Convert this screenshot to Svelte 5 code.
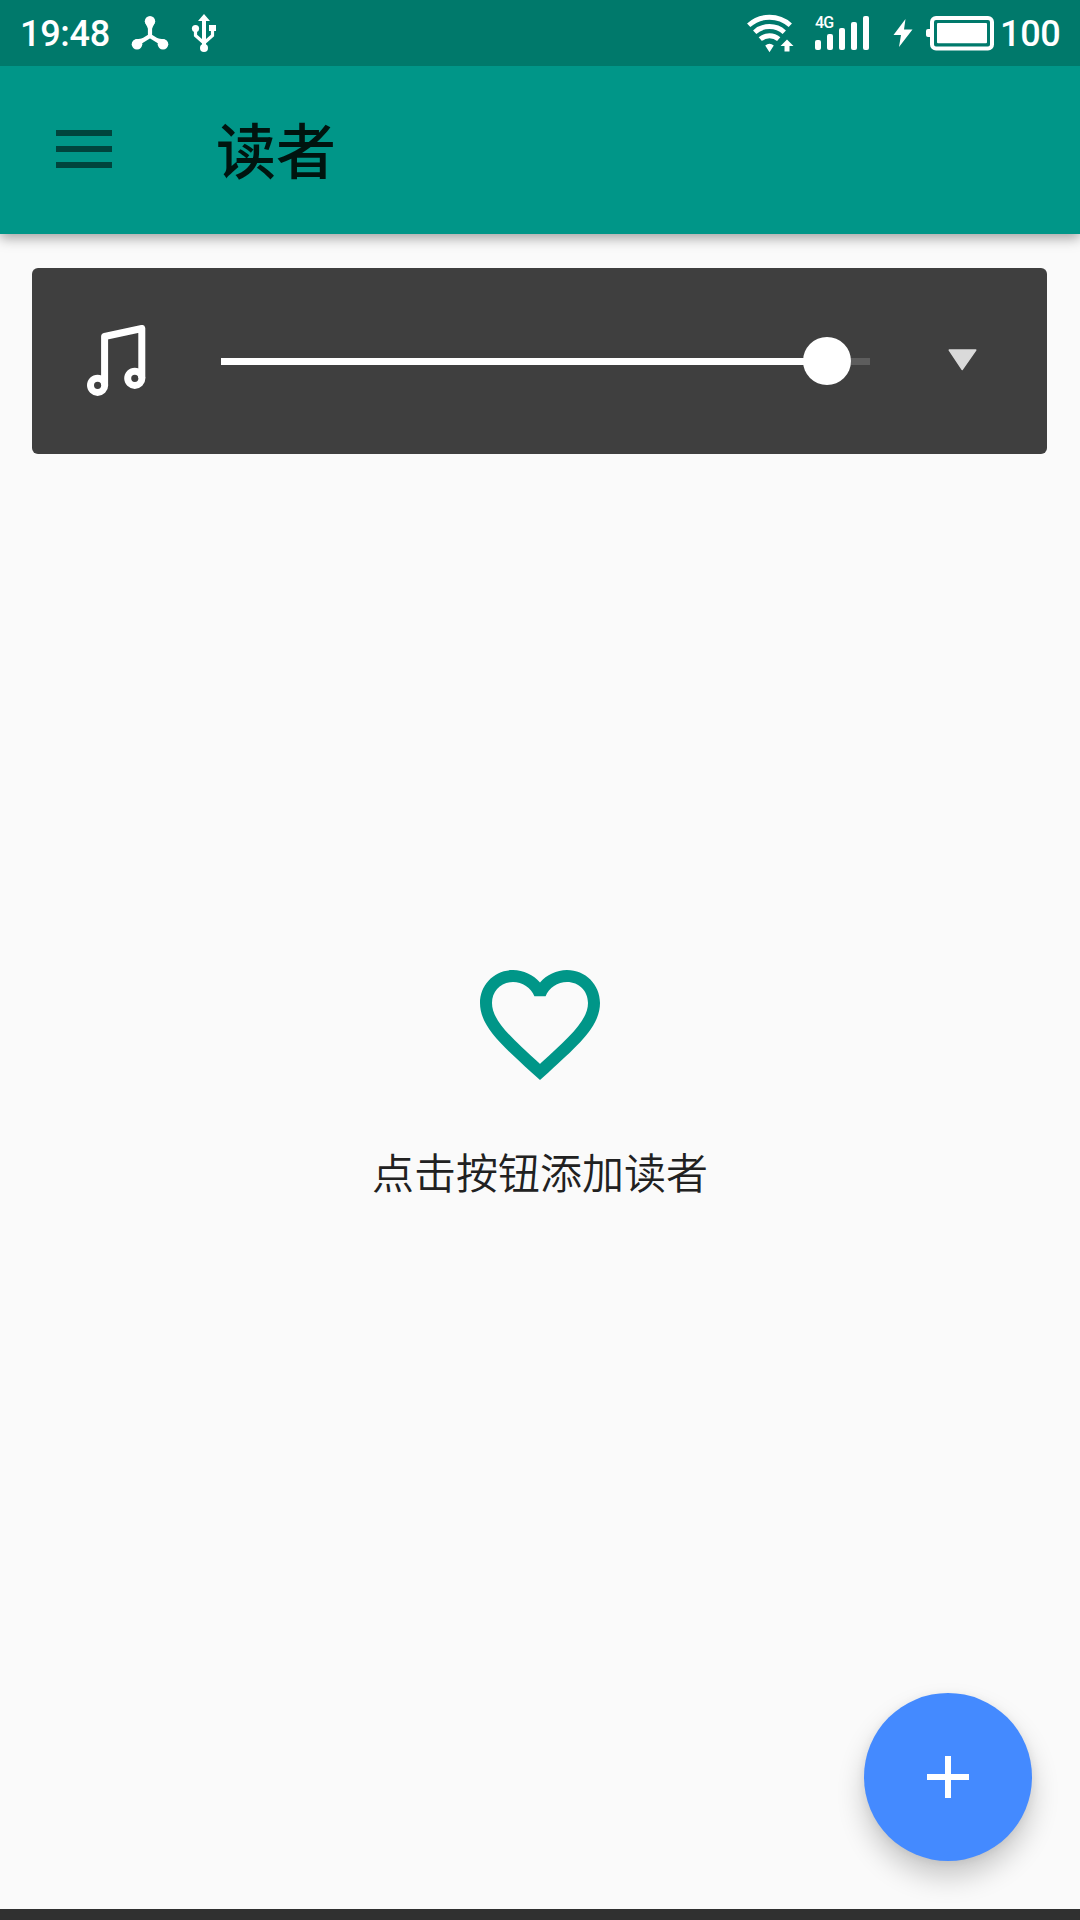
<script>
  let volume = $state(93.4);
  const signalBars = [10, 16, 22, 28, 34];
</script>

<div class="screen">
  <header class="status">
    <span class="time">19:48</span>
    <svg class="node" width="38" height="36" viewBox="0 0 38 36">
      <path d="M19 6V21M19 20L6 28M19 20L32 28" stroke="#fff" stroke-width="4.2" fill="none" />
      <path d="M14.5 7L18 15H20L23.5 7ZM4 23.5L14 22L8 33ZM34 23.5L24 22L30 33Z" fill="#fff" />
      <circle cx="19" cy="5.2" r="5.2" fill="#fff" />
      <circle cx="6" cy="28.2" r="5.3" fill="#fff" />
      <circle cx="32" cy="28.2" r="5.3" fill="#fff" />
    </svg>
    <svg class="usb" width="26" height="38" viewBox="0 0 26 38">
      <path d="M13 4V34" stroke="#fff" stroke-width="4" fill="none" />
      <path d="M4.5 14V21.5L13 29M21.5 14V21.5L13 29" stroke="#fff" stroke-width="3.2" fill="none" />
      <path d="M13 0L19 7H7ZM18 11H25V17H18Z" fill="#fff" />
      <circle cx="4.5" cy="14.5" r="3.6" fill="#fff" />
      <circle cx="13" cy="34" r="4" fill="#fff" />
    </svg>
    <span class="spacer"></span>
    <svg class="wifi" width="48" height="40" viewBox="0 0 48 40">
      <g stroke="#fff" stroke-width="4.9" fill="none">
        <path d="M1.7 11.2A31 31 0 0 1 43.3 11.2" />
        <path d="M7.7 18.2A22 22 0 0 1 37.3 18.2" />
        <path d="M13.3 25.2A14 14 0 0 1 31.7 25.2" />
      </g>
      <path d="M18.2 31.4Q22.5 28 26.8 31.4L22.5 38.2ZM40 25.4L46.5 32H42.5V37.5H37.5V32H33.5Z" fill="#fff" />
    </svg>
    <div class="signal">
      <span class="network">4G</span>
      {#each signalBars as h}
        <i style:height="{h}px"></i>
      {/each}
    </div>
    <svg class="bolt" width="20" height="28" viewBox="0 0 20 28">
      <path d="M12.5 0L0.5 16H8L6 28L19.5 10.5H11Z" fill="#fff" />
    </svg>
    <svg class="battery" width="69" height="36" viewBox="0 0 69 36">
      <rect x="6" y="2" width="60" height="30.5" rx="4" stroke="#fff" stroke-width="4" fill="none" />
      <path d="M5 13H2Q0 13 0 15V19Q0 21 2 21H5Z" fill="#fff" />
      <rect x="11" y="7" width="50" height="20.3" rx="1" fill="#fff" />
    </svg>
    <span class="percent">100</span>
  </header>

  <div class="appbar">
    <button class="menu" aria-label="菜单"><i></i><i></i><i></i></button>
    <h1>读者</h1>
  </div>

  <main>
    <section class="volume">
      <svg class="note" width="60" height="72" viewBox="0 0 60 72">
        <path d="M17.6 60V11.5L54.8 3.5V53" stroke="#fff" stroke-width="7" stroke-linejoin="round" fill="none" />
        <circle cx="10.6" cy="60.3" r="7.1" stroke="#fff" stroke-width="7" fill="none" />
        <circle cx="47.8" cy="53.3" r="7.1" stroke="#fff" stroke-width="7" fill="none" />
      </svg>
      <div class="track">
        <div class="fill" style:width="{volume}%"><b></b></div>
      </div>
      <svg class="caret" width="29" height="22" viewBox="0 0 29 22">
        <path d="M1.2 1H27.8L14.2 20.5Z" fill="#dadada" stroke="#dadada" stroke-width="1.4" stroke-linejoin="round" />
      </svg>
    </section>

    <section class="empty">
      <svg width="144" height="144" viewBox="0 0 24 24" fill="#009688">
        <path d="M12.1 18.55L12 18.65L11.89 18.55C7.14 14.24 4 11.39 4 8.5C4 6.5 5.5 5 7.5 5C9.04 5 10.54 6 11.07 7.36H12.93C13.46 6 14.96 5 16.5 5C18.5 5 20 6.5 20 8.5C20 11.39 16.86 14.24 12.1 18.55M16.5 3C14.76 3 13.09 3.81 12 5.08C10.91 3.81 9.24 3 7.5 3C4.42 3 2 5.41 2 8.5C2 12.27 5.4 15.36 10.55 20.03L12 21.35L13.45 20.03C18.6 15.36 22 12.27 22 8.5C22 5.41 19.58 3 16.5 3Z" />
      </svg>
      <p>点击按钮添加读者</p>
    </section>

    <button class="fab" aria-label="添加">
      <svg width="42" height="42" viewBox="0 0 42 42"><path d="M18 0H24V18H42V24H24V42H18V24H0V18H18Z" fill="#fff" /></svg>
    </button>
  </main>
  <footer></footer>
</div>

<style>
  :global(body) { margin: 0; }
  .screen {
    width: 1080px;
    height: 1920px;
    display: flex;
    flex-direction: column;
    overflow: hidden;
    background: #fafafa;
    font-family: Roboto, "Noto Sans CJK SC", sans-serif;
  }
  button { border: 0; padding: 0; }
  svg { display: block; flex: none; }
  .status {
    flex: none;
    position: relative;
    z-index: 2;
    box-sizing: border-box;
    height: 66px;
    display: flex;
    align-items: flex-start;
    padding-left: 20px;
    background: #00796b;
    color: #fff;
    font-size: 36px;
    font-weight: 500;
  }
  .time, .percent { line-height: 42px; margin-top: 13px; letter-spacing: -0.3px; }
  .time { width: 92px; }
  .node { margin: 16px 0 0 19px; }
  .usb { margin: 14px 0 0 22px; }
  .spacer { flex: 1; }
  .wifi { margin: 13.5px 0 0; }
  .signal {
    position: relative;
    display: flex;
    align-items: flex-end;
    gap: 6px;
    height: 34px;
    margin: 16px 0 0 20.5px;
  }
  .signal i { width: 6px; border-radius: 2px; background: #fff; }
  .network {
    position: absolute;
    left: 0;
    top: -1px;
    font-size: 16px;
    line-height: 16px;
    font-weight: 500;
    letter-spacing: -0.9px;
  }
  .bolt { margin: 19px 0 0 24px; }
  .battery { margin: 16px 0 0 13px; }
  .percent { width: 80px; margin-left: 5px; }
  .appbar {
    flex: none;
    position: relative;
    height: 168px;
    display: flex;
    align-items: center;
    background: #009688;
    box-shadow: 0 4px 12px rgba(0, 0, 0, 0.36);
  }
  .menu {
    display: flex;
    flex-direction: column;
    gap: 10px;
    width: 56px;
    margin: -2px 0 0 56px;
    background: none;
  }
  .menu i { height: 6px; background: #00443d; }
  h1 {
    margin: 8px 0 0 104px;
    font-size: 60px;
    line-height: 88px;
    font-weight: 500;
    color: #00140f;
  }
  main { flex: 1; display: flex; flex-direction: column; }
  .volume {
    box-sizing: border-box;
    height: 186px;
    margin: 34px 33px 0 32px;
    padding: 0 70px 0 55px;
    display: flex;
    align-items: center;
    border-radius: 6px;
    background: #3f3f3f;
  }
  .note { margin: 0 74px 0 0; }
  .track { flex: none; width: 649px; height: 7px; margin-top: 1px; background: #5d5d5d; }
  .fill { display: flex; align-items: center; justify-content: flex-end; height: 7px; background: #fff; }
  .fill b { flex: none; width: 48px; height: 48px; margin: 0 -24px 1px 0; border-radius: 50%; background: #fff; }
  .caret { margin: 0 0 2px 78px; }
  .empty {
    flex: 1;
    display: flex;
    flex-direction: column;
    align-items: center;
    padding-top: 498px;
  }
  .empty p { margin: 48px 0 0; font-size: 42px; line-height: 62px; font-weight: 350; color: #212121; }
  .fab {
    width: 168px;
    height: 168px;
    margin: 0 48px 48px auto;
    display: flex;
    align-items: center;
    justify-content: center;
    border-radius: 50%;
    background: #448aff;
    box-shadow: 0 16px 28px rgba(0, 0, 0, 0.2), 0 2px 10px rgba(0, 0, 0, 0.07);
  }
  footer { flex: none; height: 11px; background: #303030; }
</style>
